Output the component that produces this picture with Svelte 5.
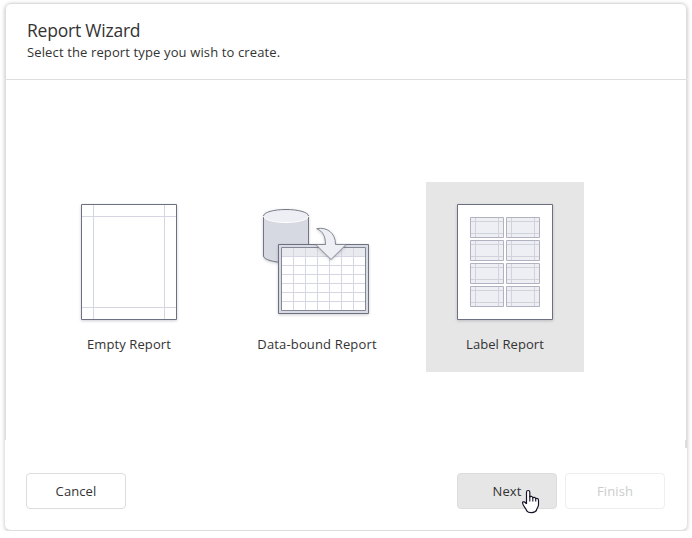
<script>
  const types = [
    { id: 'empty', label: 'Empty Report', spacing: '0.1px' },
    { id: 'data', label: 'Data-bound Report', spacing: '0.15px' },
    { id: 'label', label: 'Label Report', spacing: '0.08px' }
  ];
  let selected = $state('label');
  const labelCells = [0, 1, 2, 3].flatMap((r) => [0, 1].map((c) => ({ x: 44 + c * 36, y: 35 + r * 23 })));
</script>

<div class="dialog">
  <header>
    <h1>Report Wizard</h1>
    <p>Select the report type you wish to create.</p>
  </header>
  <main>
    {#each types as t}
      <button class="tile" class:selected={selected === t.id} onclick={() => (selected = t.id)}>
        <svg width="158" height="150" viewBox="0 0 158 150" fill="none">
          {#if t.id === 'empty'}
            <g class="shadow"><path d="M31.5 22.5h95v115h-95z" fill="#fff" stroke="#6d7080" /></g>
            <path d="M43.5 23v114M114.5 23v114M32 34.5h94M32 125.5h94" stroke="#d5d6e1" />
          {:else if t.id === 'data'}
            <g class="shadow">
              <path d="M25.5 34v40c0 3.600 10.100 6.500 22.500 6.500s22.500-2.900 22.500-6.500V34z" fill="#d7d9e2" />
              <path d="M25.500 34v40c0 3.600 10.100 6.500 22.500 6.500s22.500-2.900 22.500-6.500V34" stroke="#737683" />
              <ellipse cx="48" cy="34" rx="22.500" ry="6.500" fill="#eeeff5" stroke="#fff" />
              <path d="M25.500 34c0-3.600 10.100-6.500 22.500-6.500s22.500 2.900 22.500 6.500" stroke="#737683" />
            </g>
            <g class="shadow"><path d="M40.500 62.500h90v69h-90z" fill="#d9dbe4" stroke="#6d7080" /></g>
            <path d="M43.500 65.500h84v63h-84z" fill="#fff" stroke="#858894" />
            <path d="M44 66h83v8H44z" fill="#e9eaf0" />
            <path d="M55.500 66v62M67.500 66v62M79.500 66v62M91.500 66v62M103.500 66v62M115.500 66v62M44 74.500h83M44 83.500h83M44 92.500h83M44 101.500h83M44 110.500h83M44 119.500h83" stroke="#d5d6e1" />
            <path class="shadow" d="M78.700 46.700C89 44.700 97.700 51 97.500 62.500h10.700L93 77.500 77.800 62.500h9.700c0-8-2.500-13.300-8.800-15.800z" fill="#eeeff5" stroke="#858894" />
          {:else}
            <g class="shadow"><path d="M31.500 22.500h95v115h-95z" fill="#fff" stroke="#6d7080" /></g>
            {#each labelCells as c}
              <g transform="translate({c.x} {c.y})">
                <path d="M.5.5h33v20H.5z" fill="#eeeff5" />
                <path d="M5.500 1v19M28.500 1v19M1 4.500h32M1 16.500h32" stroke="#d1d3da" />
                <path d="M.5.5h33v20H.5z" stroke="#b0b3bf" />
              </g>
            {/each}
          {/if}
        </svg>
        <span style:letter-spacing={t.spacing}>{t.label}</span>
      </button>
    {/each}
  </main>
  <footer>
    <button class="btn cancel"><span>Cancel</span></button>
    <button class="btn next"><span>Next</span></button>
    <button class="btn finish" disabled><span>Finish</span></button>
  </footer>
  <i class="edge"></i>
</div>
<svg class="cursor" width="20" height="26" viewBox="0 0 20 26">
  <path d="M5.500 15V3.300c0-2.400 3.300-2.400 3.300 0V8c.5-1 2.800-.8 3 .8.900-.9 2.700-.5 2.900.9 1-.8 2.800-.1 2.800 1.500v4.300c0 2.700-1.700 3.400-1.900 5.500-1.300 3.200-8 3.500-9.900.8-.5-2.400-3.900-4.800-4.200-8 .4-1.800 2.800-1.100 4 1.200" fill="#fff" stroke="#171529" stroke-width="1.200" stroke-linejoin="round" />
  <path d="M8.800 7v5.500M11.800 8.500v4M14.700 9.500v3" stroke="#171529" stroke-width="1.100" />
</svg>

<style>
  :global(body) { background: #fff; }
  .dialog {
    position: relative;
    box-sizing: border-box;
    width: 682px;
    height: 528px;
    margin: 3px 0 0 5px;
    display: flex;
    flex-direction: column;
    border-radius: 6px;
    background: #fff;
    box-shadow: 0 1px 4px rgba(0, 0, 0, 0.26);
    font-family: "Open Sans", "Noto Sans", sans-serif;
    color: #333;
  }
  header {
    box-sizing: border-box;
    height: 77px;
    padding: 14px 21px 0;
    border: 1px solid #ddd;
    border-radius: 6px 6px 0 0;
  }
  h1, p { margin: 0; font-weight: 400; white-space: nowrap; }
  h1 { font-size: 17.5px; line-height: 25px; letter-spacing: -0.22px; }
  p { font-size: 13px; line-height: 18px; letter-spacing: 0.13px; }
  main {
    box-sizing: border-box;
    height: 360px;
    padding: 102px 44px 0;
    display: flex;
    gap: 30px;
    border: solid #ddd;
    border-width: 0 1px;
  }
  button { font: inherit; color: inherit; padding: 0; margin: 0; }
  .tile {
    width: 158px;
    height: 190px;
    border: 0;
    background: none;
    display: flex;
    flex-direction: column;
    align-items: center;
    font-size: 13px;
    line-height: 24px;
  }
  .tile.selected { background: #e6e6e6; }
  .tile svg { display: block; flex: none; }
  .shadow { filter: drop-shadow(0 1px 1.500px rgba(60, 65, 85, 0.25)); }
  footer {
    box-sizing: border-box;
    height: 91px;
    padding: 33px 22px 0 21px;
    display: flex;
    gap: 8px;
    border-bottom: 1px solid #ddd;
    border-radius: 0 0 6px 6px;
  }
  .btn {
    box-sizing: border-box;
    width: 100px;
    height: 36px;
    border: 1px solid #ddd;
    border-radius: 4px;
    background: #fff;
    font-size: 13px;
    line-height: 34px;
    letter-spacing: 0.1px;
  }
  .cancel { margin-right: auto; }
  .next { background: #e6e6e6; border-color: #dcdcdc; }
  .finish { color: #ccc; border-color: #eee; }
  .edge {
    position: absolute;
    right: 0;
    top: 437px;
    width: 2px;
    height: 8px;
    background: #ddd;
  }
  .cursor { position: absolute; left: 521px; top: 489px; }
</style>
